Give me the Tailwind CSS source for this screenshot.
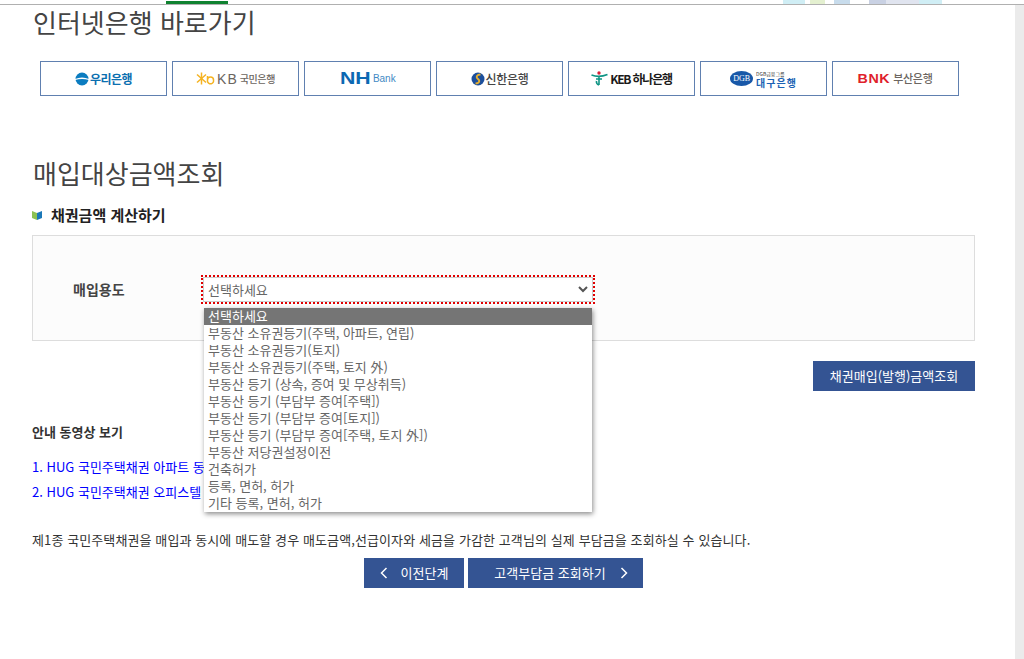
<!DOCTYPE html>
<html lang="ko">
<head>
<meta charset="utf-8">
<script src="https://cdn.jsdelivr.net/npm/@tailwindcss/browser@4"></script>
<title>매입대상금액조회</title>
</head>
<body class="bg-white font-['Noto_Sans_CJK_KR',sans-serif] text-[#333]">
<div class="h-[659px] w-[1024px] overflow-hidden flex flex-col relative">
  <!-- top strip -->
  <div class="h-[5px] flex shrink-0 border-b border-[#b0b0b0]">
    <div class="w-[166px]"></div>
    <div class="w-[62px] bg-[#0f8230] mt-[1px]"></div>
    <div class="w-[555px]"></div>
    <div class="w-[22px] bg-[#d0eef5]"></div>
    <div class="w-[5px]"></div>
    <div class="w-[15px] bg-[#e4f0d0]"></div>
    <div class="w-[9px]"></div>
    <div class="w-[16px] bg-[#c8dcec]"></div>
    <div class="w-[19px]"></div>
    <div class="w-[17px] bg-[#c9d1e3]"></div>
    <div class="w-[33px] bg-[#e0e4ef]"></div>
    <div class="w-[23px] bg-[#d0eef5]"></div>
  </div>
  <div class="flex-1 flex min-h-0">
    <main class="flex-1 pl-[32px] pr-[40px] min-w-0">
      <h2 class="text-[26px] leading-[34px] text-[#444] font-normal ml-[1px]">인터넷은행 바로가기</h2>
      <!-- banks -->
      <div class="flex gap-[5px] ml-[8px] mt-[22px]">
        <div class="w-[127px] h-[35px] border border-[#6080b0] flex items-center justify-center gap-[1px]">
          <svg width="14" height="14" viewBox="0 0 14 14"><circle cx="7" cy="7" r="6.5" fill="#0b7cc0"/><path d="M0 7 Q7 4 14 7 L14 8 Q7 6 0 8Z" fill="#fff"/></svg>
          <span class="text-[12px] font-bold text-[#0b6fb0] tracking-[-0.5px]">우리은행</span>
        </div>
        <div class="w-[127px] h-[35px] border border-[#6080b0] flex items-center justify-center gap-[2px]">
          <svg width="19" height="13" viewBox="0 0 19 13"><g stroke="#f5b321" stroke-width="1.5" fill="none"><path d="M1 2.5 L10 10.5"/><path d="M1 10.5 L10 2.5"/><path d="M5.5 0.5 V12.5"/><path d="M11.5 4 V9.5 A2.7 2.7 0 1 0 17.5 8 A2.7 2.7 0 0 0 11.5 8"/></g></svg>
          <span class="text-[14px] leading-none text-[#6b6560] font-['Liberation_Sans',sans-serif] tracking-[1px]">KB</span>
          <span class="text-[10px] font-medium text-[#6b6560] tracking-[-0.4px]">국민은행</span>
        </div>
        <div class="w-[127px] h-[35px] border border-[#6080b0] flex items-center justify-center gap-[1px] pl-[4px]">
          <span class="text-[17px] leading-none font-bold text-[#0c68b2] font-['Liberation_Sans',sans-serif] scale-x-125 mr-[4px]">NH</span>
          <span class="text-[10px] font-medium text-[#3f8ac4] font-['Liberation_Sans',sans-serif]">Bank</span>
        </div>
        <div class="w-[127px] h-[35px] border border-[#6080b0] flex items-center justify-center gap-[1px]">
          <svg width="14" height="14" viewBox="0 0 14 14"><circle cx="7" cy="7" r="6.5" fill="#1c4f9c"/><path d="M9.5 2.5 C6 2.5 4.5 5 7 7 C9.5 9 8 11.5 4.5 11.5" stroke="#e8b030" stroke-width="1.8" fill="none"/></svg>
          <span class="text-[12px] font-medium text-[#444] tracking-[-0.3px]">신한은행</span>
        </div>
        <div class="w-[127px] h-[35px] border border-[#6080b0] flex items-center justify-center gap-[2px]">
          <svg width="17" height="15" viewBox="0 0 17 15"><circle cx="8" cy="2" r="1.7" fill="#d8203a"/><path d="M0.5 4 Q8 7 16.5 3.5 M5 8 H11 M8 5.5 V14 M8 14 Q5 13 5.5 10" stroke="#0e9484" stroke-width="1.6" fill="none"/></svg>
          <span class="text-[12px] font-bold text-[#1a1a1a] tracking-[-1.2px]">KEB 하나은행</span>
        </div>
        <div class="w-[127px] h-[35px] border border-[#6080b0] flex items-center justify-center gap-[3px]">
          <span class="w-[23px] h-[15px] rounded-[50%] bg-[#1858a8] text-white text-[8px] leading-[15px] text-center font-['Liberation_Serif',serif]">DGB</span>
          <span class="flex flex-col leading-none">
            <span class="text-[5px] leading-[7px] text-[#333]">DGB금융그룹</span>
            <span class="text-[10px] leading-[11px] font-bold text-[#1c62b4] tracking-[1px]">대구은행</span>
          </span>
        </div>
        <div class="w-[127px] h-[35px] border border-[#6080b0] flex items-center justify-center gap-[3px]">
          <span class="text-[13px] font-bold text-[#e01f2c] font-['Liberation_Sans',sans-serif] tracking-[0.5px] scale-x-110 mr-[2px]">BNK</span>
          <span class="text-[11px] font-medium text-[#6b6560] tracking-[-0.3px]">부산은행</span>
        </div>
      </div>
      <!-- heading -->
      <h1 class="mt-[58px] ml-[1px] text-[26px] leading-[38px] text-[#444] font-normal">매입대상금액조회</h1>
      <div class="mt-[13px] flex items-center gap-[9px] h-[20px]">
        <svg width="10" height="9" viewBox="0 0 10 9"><path d="M0 0 L5 2 V9 L0 7Z" fill="#8cc152"/><path d="M10 0 L5 2 V9 L10 7Z" fill="#1b78b8"/></svg>
        <h3 class="text-[15px] font-bold text-[#222] leading-[20px]">채권금액 계산하기</h3>
      </div>
      <!-- form box -->
      <div class="mt-[10px] h-[106px] border border-[#ddd] bg-[#fcfcfc] pt-[41px] flex items-start">
        <span class="w-[170px] pl-[40px] text-[14px] font-bold leading-[25px] text-[#444] shrink-0">매입용도</span>
        <div class="w-[390px] h-[25px] border border-[#ccc] bg-white outline-2 outline-dotted outline-[#e00000] flex items-center justify-between pl-[4px] pr-[4px] text-[13px] text-[#666]">
          <span>선택하세요</span>
          <svg width="10" height="7" viewBox="0 0 10 7"><path d="M1 1 L5 5 L9 1" fill="none" stroke="#555" stroke-width="2"/></svg>
        </div>
      </div>
      <div class="flex justify-end mt-[20px]">
        <button class="w-[162px] h-[30px] bg-[#345493] text-white text-[13px]">채권매입(발행)금액조회</button>
      </div>
      <p class="mt-[32px] text-[13px] font-bold leading-[18px] text-[#333]">안내 동영상 보기</p>
      <p class="mt-[17px] text-[13px] leading-[18px] text-[#0000ff]">1. HUG 국민주택채권 아파트 동</p>
      <p class="mt-[7px] text-[13px] leading-[18px] text-[#0000ff]">2. HUG 국민주택채권 오피스텔</p>
      <p class="mt-[30px] text-[13px] tracking-[0.1px] leading-[18px] text-[#333]">제1종 국민주택채권을 매입과 동시에 매도할 경우 매도금액,선급이자와 세금을 가감한 고객님의 실제 부담금을 조회하실 수 있습니다.</p>
      <div class="flex gap-[4px] mt-[9px] ml-[332px]">
        <button class="w-[100px] h-[30px] bg-[#345493] text-white text-[13px] flex items-center justify-center gap-[13px]">
          <svg width="8" height="12" viewBox="0 0 8 12"><path d="M6.5 1 L1.5 6 L6.5 11" fill="none" stroke="#fff" stroke-width="1.5"/></svg>
          <span>이전단계</span>
        </button>
        <button class="w-[175px] h-[30px] bg-[#345493] text-white text-[13px] flex items-center justify-center gap-[14px] pl-[11px]">
          <span>고객부담금 조회하기</span>
          <svg width="8" height="12" viewBox="0 0 8 12"><path d="M1.5 1 L6.5 6 L1.5 11" fill="none" stroke="#fff" stroke-width="1.5"/></svg>
        </button>
      </div>
    </main>
    <div class="w-[9px] bg-[#ebebeb] shrink-0"></div>
  </div>
  <!-- open select list -->
  <ul class="absolute left-[204px] top-[308px] w-[388px] bg-white shadow-[1px_2px_5px_rgba(0,0,0,0.45)] text-[13px] leading-[15px] text-[#666]">
    <li class="bg-[#757575] text-white px-[4px] h-[17px]">선택하세요</li>
    <li class="px-[4px] h-[17px]">부동산 소유권등기(주택, 아파트, 연립)</li>
    <li class="px-[4px] h-[17px]">부동산 소유권등기(토지)</li>
    <li class="px-[4px] h-[17px]">부동산 소유권등기(주택, 토지 外)</li>
    <li class="px-[4px] h-[17px]">부동산 등기 (상속, 증여 및 무상취득)</li>
    <li class="px-[4px] h-[17px]">부동산 등기 (부담부 증여[주택])</li>
    <li class="px-[4px] h-[17px]">부동산 등기 (부담부 증여[토지])</li>
    <li class="px-[4px] h-[17px]">부동산 등기 (부담부 증여[주택, 토지 外])</li>
    <li class="px-[4px] h-[17px]">부동산 저당권설정이전</li>
    <li class="px-[4px] h-[17px]">건축허가</li>
    <li class="px-[4px] h-[17px]">등록, 면허, 허가</li>
    <li class="px-[4px] h-[17px]">기타 등록, 면허, 허가</li>
  </ul>
</div>
</body>
</html>
